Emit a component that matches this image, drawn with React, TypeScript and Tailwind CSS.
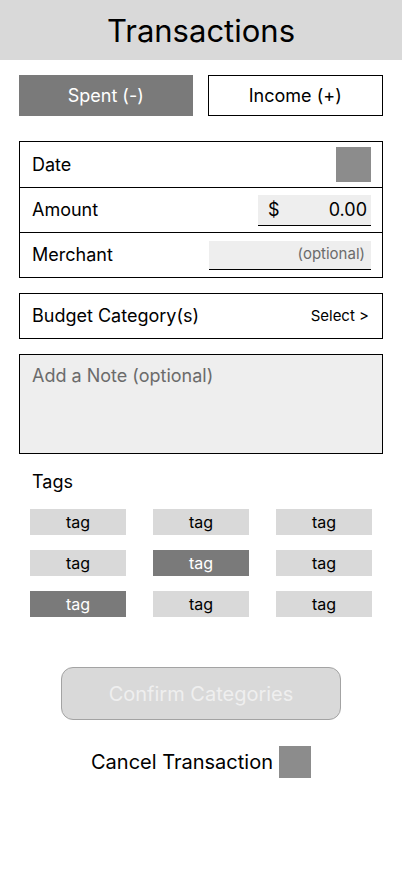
import React from 'react';

const tags = [false, false, false, false, true, false, true, false, false];

const Row: React.FC<{ label: string; children?: React.ReactNode; first?: boolean }> = ({ label, children, first }) => (
  <div className={`flex items-center justify-between h-[45px] pl-3 pr-[11px] ${first ? '' : 'border-t border-black'}`}>
    <span className="text-[18px] leading-[22px] text-black">{label}</span>
    {children}
  </div>
);

export default function App() {
  return (
    <div className="min-h-[874px] bg-white" style={{ fontFamily: 'Inter, "Noto Sans", sans-serif' }}>
      <div className="h-[60px] bg-[#d9d9d9] flex items-center justify-center">
        <h1 className="text-[31px] text-black leading-none">Transactions</h1>
      </div>

      <div className="px-[19px]">
        <div className="mt-[15px] flex gap-[15px] h-[41px]">
          <button className="flex-1 bg-[#7a7a7a] text-white text-[18px]">Spent (-)</button>
          <button className="flex-1 border border-black bg-white text-black text-[18px]">Income (+)</button>
        </div>

        <div className="mt-[25px] border border-black">
          <Row label="Date" first>
            <div className="w-[35px] h-[35px] bg-[#8c8c8c]" />
          </Row>
          <Row label="Amount">
            <div className="w-[113px] h-[31px] bg-[#eeeeee] border-b border-black flex items-center justify-between pl-[10px] pr-[4px] text-[18px] text-black">
              <span>$</span>
              <span>0.00</span>
            </div>
          </Row>
          <Row label="Merchant">
            <div className="w-[162px] h-[29px] bg-[#eeeeee] border-b border-black flex items-center justify-end pr-[6px] text-[15px] text-[#6b6b6b]">
              (optional)
            </div>
          </Row>
        </div>

        <div className="mt-[15px] h-[46px] border border-black flex items-center justify-between pl-3 pr-[13px]">
          <span className="text-[18px] leading-[22px] text-black">Budget Category(s)</span>
          <span className="text-[15px] text-black">Select &gt;</span>
        </div>

        <div className="mt-[15px] h-[100px] border border-black bg-[#eeeeee] pl-3 pt-[9px]">
          <span className="text-[18px] leading-[22px] text-[#6b6b6b]">Add a Note (optional)</span>
        </div>

        <div className="mt-[17px] pl-[13px] text-[18px] leading-[22px] text-black">Tags</div>

        <div className="mt-[16px] ml-[11px] grid grid-cols-[96px_96px_96px] gap-x-[27px] gap-y-[15px]">
          {tags.map((on, i) => (
            <div
              key={i}
              className={`h-[26px] flex items-center justify-center text-[16px] ${on ? 'bg-[#7a7a7a] text-white' : 'bg-[#d9d9d9] text-black'}`}
            >
              tag
            </div>
          ))}
        </div>
      </div>

      <div className="flex justify-center mt-[50px]">
        <button className="w-[280px] h-[53px] rounded-[12px] bg-[#d9d9d9] border border-[#a3a3a3] text-[20px] text-[#efefef]">
          Confirm Categories
        </button>
      </div>

      <div className="mt-[26px] flex items-center justify-center gap-[6px]">
        <span className="text-[20px] text-black">Cancel Transaction</span>
        <div className="w-[32px] h-[32px] bg-[#8c8c8c]" />
      </div>
    </div>
  );
}
